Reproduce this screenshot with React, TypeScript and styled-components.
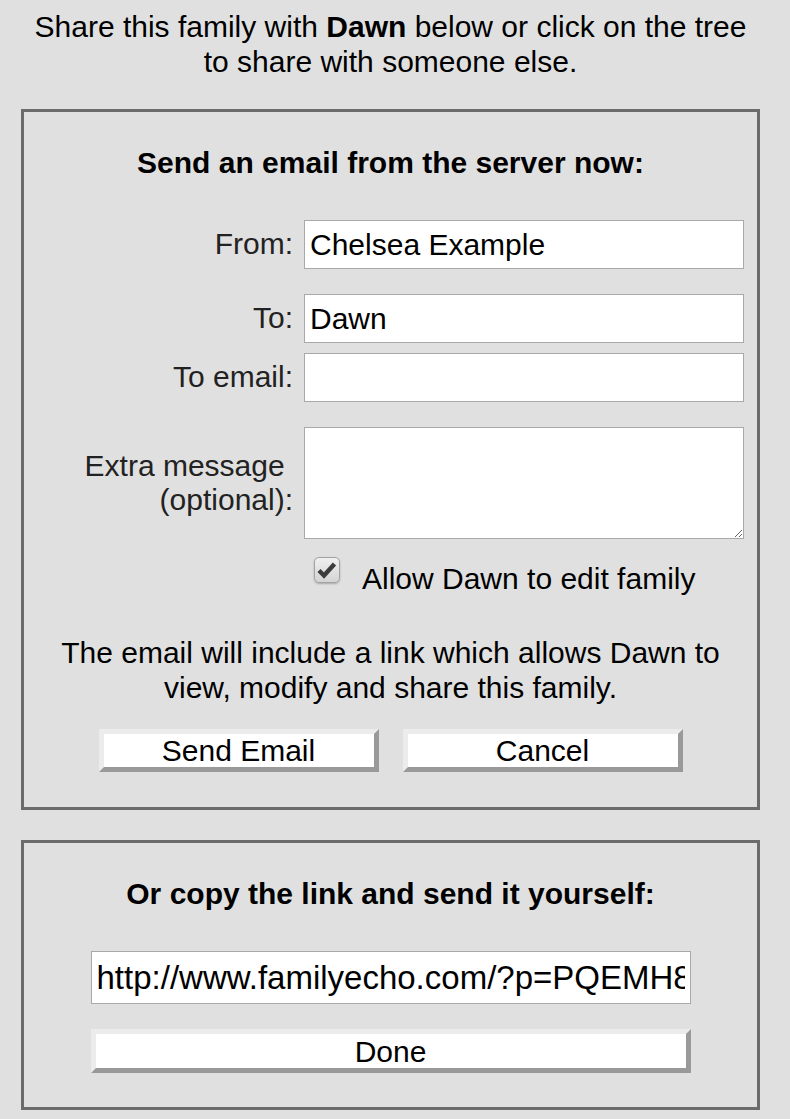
import React from "react";
import styled, { createGlobalStyle } from "styled-components";

const Global = createGlobalStyle`
  html, body {
    margin: 0;
    padding: 0;
    background: #e0e0e0;
  }
  body {
    font-family: "Liberation Sans", Arial, sans-serif;
    color: #000;
  }
`;

const Page = styled.div`
  width: 739px;
  padding: 9px 0 0 21px;
  display: flex;
  flex-direction: column;
`;

const Intro = styled.p`
  margin: 0;
  font-size: 30px;
  line-height: 35px;
  text-align: center;
`;

const Panel = styled.section<{ $top: number; $bottom: number }>`
  margin-top: ${(p) => p.$top}px;
  border: 3px solid #6b6b6b;
  padding: 33px 0 ${(p) => p.$bottom}px;
  display: flex;
  flex-direction: column;
  align-items: stretch;
`;

const Heading = styled.h2`
  margin: 0;
  font-size: 30px;
  line-height: 35px;
  font-weight: bold;
  text-align: center;
`;

const Form = styled.div`
  margin-top: 40px;
  display: grid;
  grid-template-columns: 269px 440px;
  column-gap: 11px;
  align-items: center;
`;

const Label = styled.label<{ $space: number }>`
  margin-top: ${(p) => p.$space}px;
  font-size: 30px;
  line-height: 34.5px;
  color: #222;
  text-align: right;
`;

const Field = styled.input<{ $space: number }>`
  margin-top: ${(p) => p.$space}px;
  box-sizing: border-box;
  width: 440px;
  height: 49px;
  padding: 0 5px;
  border: 1px solid #a9a9a9;
  border-radius: 0;
  background: #fff;
  font-family: "Liberation Sans", Arial, sans-serif;
  font-size: 30px;
  color: #000;
  outline: none;
`;

const Message = styled.textarea<{ $space: number }>`
  margin-top: ${(p) => p.$space}px;
  box-sizing: border-box;
  width: 440px;
  height: 112px;
  padding: 5px;
  border: 1px solid #a9a9a9;
  border-radius: 0;
  background: #fff;
  font-family: "Liberation Sans", Arial, sans-serif;
  font-size: 30px;
  outline: none;
  display: block;
`;

const CheckRow = styled.div`
  grid-column: 2;
  margin-top: 18px;
  display: flex;
  align-items: flex-start;
  gap: 22px;
  padding-left: 10px;
  font-size: 30px;
  line-height: 35px;
  color: #000;
  align-self: start;
`;

const CheckText = styled.span`
  padding-top: 4px;
`;

const CheckBox = styled.span`
  box-sizing: border-box;
  width: 26px;
  height: 26px;
  flex: none;
  border: 1px solid #a3a3a3;
  border-radius: 5px;
  background: linear-gradient(#f0f0f0, #d4d4d4);
  box-shadow: 0 1px 2px rgba(0, 0, 0, 0.25);
  display: flex;
  align-items: center;
  justify-content: center;
`;

const Note = styled.p`
  margin: 39px 0 0;
  padding: 0 10px;
  font-size: 30px;
  line-height: 35px;
  text-align: center;
`;

const ButtonRow = styled.div<{ $space: number }>`
  margin-top: ${(p) => p.$space}px;
  display: flex;
  justify-content: center;
  gap: 24px;
`;

const Button = styled.button<{ $w: number; $h: number }>`
  box-sizing: border-box;
  width: ${(p) => p.$w}px;
  height: ${(p) => p.$h}px;
  padding: 0;
  background: #fff;
  border-style: solid;
  border-width: 5px;
  border-color: #ececec #999 #999 #ececec;
  border-radius: 0;
  font-family: "Liberation Sans", Arial, sans-serif;
  font-size: 30px;
  line-height: 33px;
  color: #000;
  cursor: pointer;
`;

const LinkField = styled.input`
  margin-top: 40px;
  box-sizing: border-box;
  width: 600px;
  height: 53px;
  padding: 0 5px;
  border: 1px solid #a9a9a9;
  border-radius: 0;
  background: #fff;
  font-family: "Liberation Sans", Arial, sans-serif;
  font-size: 33px;
  color: #000;
  outline: none;
`;

const Centered = styled.div`
  display: flex;
  justify-content: center;
`;

const CheckMark = () => (
  <svg width="24" height="24" viewBox="0 0 24 24" aria-hidden="true">
    <polyline
      points="4,12.5 9,17.5 19.5,6"
      fill="none"
      stroke="#3c3c3c"
      strokeWidth="4.4"
      strokeLinejoin="miter"
    />
  </svg>
);

export default function App() {
  return (
    <>
      <Global />
      <Page>
        <Intro>
          Share this family with <b>Dawn</b> below or click on the tree to share with someone else.
        </Intro>

        <Panel $top={30} $bottom={35}>
          <Heading>Send an email from the server now:</Heading>
          <Form>
            <Label $space={0}>From:</Label>
            <Field $space={0} defaultValue="Chelsea Example" />
            <Label $space={25}>To:</Label>
            <Field $space={25} defaultValue="Dawn" />
            <Label $space={10}>To email:</Label>
            <Field $space={10} defaultValue="" />
            <Label $space={25}>
              Extra message&nbsp;
              <br />
              (optional):
            </Label>
            <Message $space={25} />
            <CheckRow>
              <CheckBox>
                <CheckMark />
              </CheckBox>
              <CheckText>Allow Dawn to edit family</CheckText>
            </CheckRow>
          </Form>
          <Note>
            The email will include a link which allows Dawn to view, modify and share this family.
          </Note>
          <ButtonRow $space={24}>
            <Button $w={280} $h={43}>Send Email</Button>
            <Button $w={280} $h={43}>Cancel</Button>
          </ButtonRow>
        </Panel>

        <Panel $top={30} $bottom={34}>
          <Heading>Or copy the link and send it yourself:</Heading>
          <Centered>
            <LinkField readOnly defaultValue="http://www.familyecho.com/?p=PQEMH8Q2WJ7L" />
          </Centered>
          <ButtonRow $space={25}>
            <Button $w={600} $h={44}>Done</Button>
          </ButtonRow>
        </Panel>
      </Page>
    </>
  );
}
